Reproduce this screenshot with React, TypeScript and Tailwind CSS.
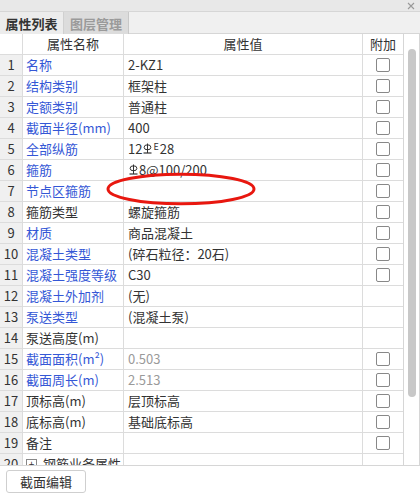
import React from "react";

const Rebar = ({ e }: { e?: boolean }) => (
  <span className="inline-flex items-start h-[15px] mx-[1px]">
    <svg width="9" height="11" viewBox="0 0 9 11" className="mt-[1px]">
      <path d="M4.5 0.5 V10" stroke="#333" strokeWidth="1" fill="none" />
      <ellipse cx="4.5" cy="4.3" rx="3.4" ry="2.5" stroke="#333" strokeWidth="1" fill="none" />
      <path d="M0.5 10 H8.5" stroke="#333" strokeWidth="1.2" fill="none" />
    </svg>
    {e && <span className="text-[9px] leading-[9px] ml-[1px]">E</span>}
  </span>
);

type Row = {
  n: string;
  label: React.ReactNode;
  blue: boolean;
  value?: React.ReactNode;
  gray?: boolean;
  check: boolean;
};

const rows: Row[] = [
  { n: "1", label: "名称", blue: true, value: "2-KZ1", check: true },
  { n: "2", label: "结构类别", blue: true, value: "框架柱", check: true },
  { n: "3", label: "定额类别", blue: true, value: "普通柱", check: true },
  { n: "4", label: "截面半径(mm)", blue: true, value: "400", check: true },
  {
    n: "5",
    label: "全部纵筋",
    blue: true,
    value: (
      <span className="inline-flex items-center">
        12
        <Rebar e />
        28
      </span>
    ),
    check: true,
  },
  {
    n: "6",
    label: "箍筋",
    blue: true,
    value: (
      <span className="inline-flex items-center">
        <Rebar />
        8@100/200
      </span>
    ),
    check: true,
  },
  { n: "7", label: "节点区箍筋", blue: true, value: "", check: true },
  { n: "8", label: "箍筋类型", blue: false, value: "螺旋箍筋", check: true },
  { n: "9", label: "材质", blue: true, value: "商品混凝土", check: true },
  { n: "10", label: "混凝土类型", blue: true, value: "(碎石粒径：20石)", check: true },
  { n: "11", label: "混凝土强度等级", blue: true, value: "C30", check: true },
  { n: "12", label: "混凝土外加剂", blue: true, value: "(无)", check: false },
  { n: "13", label: "泵送类型", blue: true, value: "(混凝土泵)", check: false },
  { n: "14", label: "泵送高度(m)", blue: false, value: "", check: false },
  { n: "15", label: "截面面积(m²)", blue: true, value: "0.503", gray: true, check: true },
  { n: "16", label: "截面周长(m)", blue: true, value: "2.513", gray: true, check: true },
  { n: "17", label: "顶标高(m)", blue: false, value: "层顶标高", check: true },
  { n: "18", label: "底标高(m)", blue: false, value: "基础底标高", check: true },
  { n: "19", label: "备注", blue: false, value: "", check: true },
];

const Check = () => (
  <div className="w-[14px] h-[14px] border border-[#888] rounded-[2px] bg-white" />
);

export default function App() {
  return (
    <div
      className="w-[420px] h-[497px] bg-white flex flex-col text-[13px] text-[#333] overflow-hidden relative"
      style={{ fontFamily: '"Microsoft YaHei", "Noto Sans CJK SC", "Noto Sans", sans-serif' }}
    >
      {/* top bar */}
      <div className="h-[12px] bg-[#e8e8e8] border-b border-[#d6d6d6] flex items-center justify-end pr-[5px] shrink-0">
        <svg width="8" height="8" viewBox="0 0 8 8">
          <path d="M1 1 L7 7 M7 1 L1 7" stroke="#999" strokeWidth="1.1" />
        </svg>
      </div>
      {/* tabs */}
      <div className="h-[22px] bg-[#f0f0f0] flex shrink-0 border-b border-[#d6d6d6]">
        <div className="w-[64px] h-[22px] border-r border-[#d0d0d0] bg-[#ececec] flex items-center justify-center font-bold text-[#333] leading-none">
          属性列表
        </div>
        <div className="w-[65px] h-[22px] border-r border-[#c8c8c8] bg-[#dcdcdc] flex items-center justify-center font-bold text-[#9a9a9a] leading-none">
          图层管理
        </div>
      </div>
      {/* table + scrollbar */}
      <div className="h-[432px] flex border-b border-[#d6d6d6] shrink-0 relative">
        <div className="w-[403px] overflow-hidden">
          <div className="flex h-[21px] border-b border-[#dcdcdc]">
            <div className="w-[23px] border-r border-[#dcdcdc]" />
            <div className="w-[101px] border-r border-[#dcdcdc] flex items-center justify-center">属性名称</div>
            <div className="w-[239px] border-r border-[#dcdcdc] flex items-center justify-center">属性值</div>
            <div className="w-[40px] flex items-center justify-center">附加</div>
          </div>
          {rows.map((r) => (
            <div key={r.n} className="flex h-[21px] border-b border-[#dcdcdc]">
              <div className="w-[23px] border-r border-[#dcdcdc] bg-[#f0f0f0] flex items-center justify-center">
                {r.n}
              </div>
              <div
                className={`w-[101px] border-r border-[#dcdcdc] flex items-center pl-[3px] whitespace-nowrap ${
                  r.blue ? "text-[#3457d6]" : "text-[#333]"
                }`}
              >
                {r.label}
              </div>
              <div
                className={`w-[239px] border-r border-[#dcdcdc] flex items-center pl-[4px] whitespace-nowrap ${
                  r.gray ? "text-[#9a9a9a]" : "text-[#333]"
                }`}
              >
                {r.value}
              </div>
              <div className="w-[40px] flex items-center justify-center">{r.check && <Check />}</div>
            </div>
          ))}
          <div className="flex h-[21px] border-b border-[#dcdcdc]">
            <div className="w-[23px] border-r border-[#dcdcdc] bg-[#f0f0f0] flex items-center justify-center">20</div>
            <div className="w-[101px] border-r border-[#dcdcdc] flex items-center pl-[3px] gap-[6px] whitespace-nowrap">
              <span className="w-[11px] h-[11px] border border-[#888] flex items-center justify-center text-[10px] leading-none">
                +
              </span>
              钢筋业务属性
            </div>
            <div className="w-[239px] border-r border-[#dcdcdc]" />
            <div className="w-[40px]" />
          </div>
        </div>
        <div className="w-[17px] border-l border-r border-[#d6d6d6] bg-white flex justify-center pt-[15px]">
          <div className="w-[8px] h-[348px] rounded-[4px] bg-[#c8c8c8]" />
        </div>
      </div>
      {/* bottom */}
      <div className="flex-1 bg-white pl-[6px] pt-[4px]">
        <div className="w-[80px] h-[23px] border border-[#cfcfcf] rounded-[3px] bg-white flex items-center justify-center">
          截面编辑
        </div>
      </div>
      {/* red ellipse annotation */}
      <svg className="absolute left-[106px] top-[172px]" width="150" height="34" viewBox="0 0 150 34">
        <ellipse cx="75" cy="17" rx="73" ry="14.8" fill="none" stroke="#e8170f" strokeWidth="3" />
      </svg>
    </div>
  );
}
